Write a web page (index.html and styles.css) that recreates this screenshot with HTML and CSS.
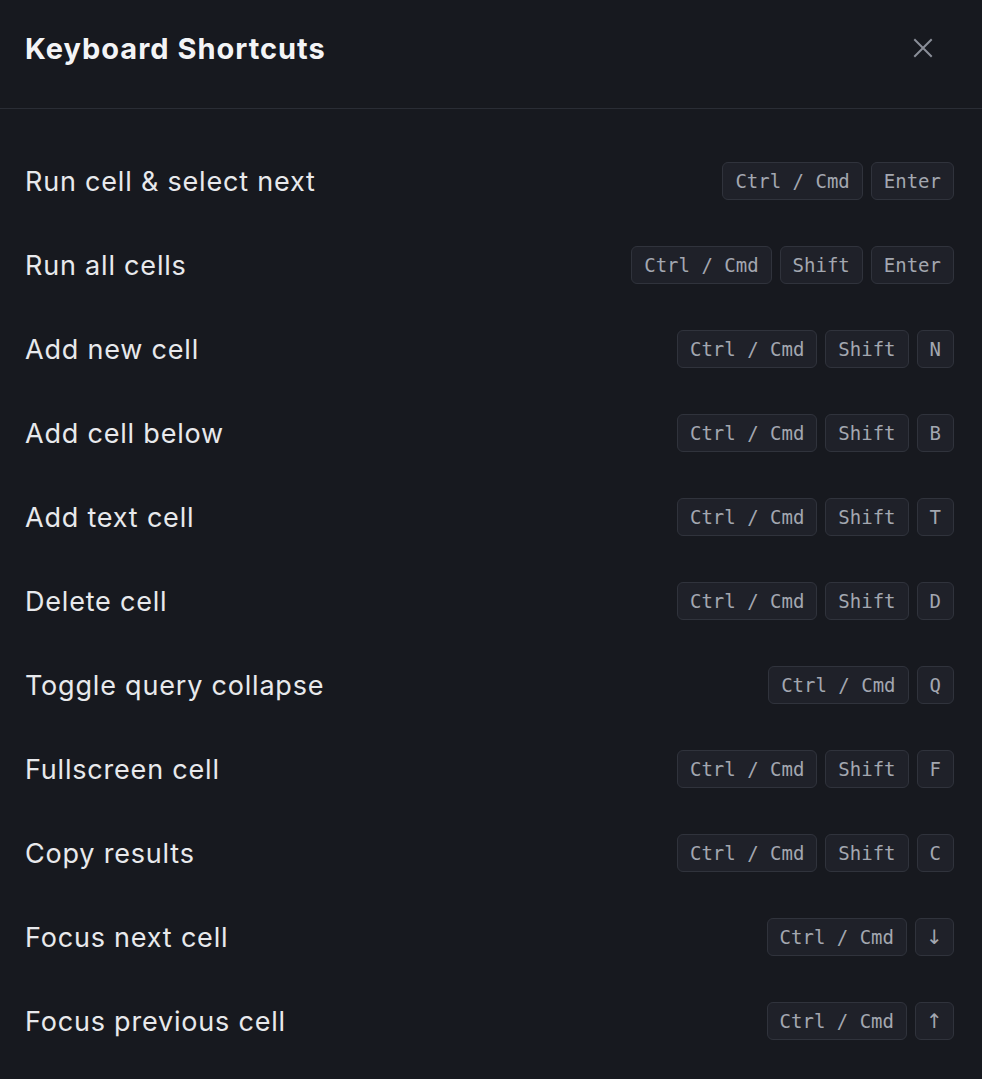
FILE: index.html
```html
<!DOCTYPE html>
<html lang="en">
<head>
<meta charset="utf-8">
<title>Keyboard Shortcuts</title>
<link rel="stylesheet" href="styles.css">
</head>
<body>
<div class="dialog">
  <div class="header">
    <h1 class="title">Keyboard Shortcuts</h1>
    <button class="close" aria-label="Close">
      <svg width="20" height="20" viewBox="0 0 20 20" fill="none" stroke="currentColor" stroke-width="2" stroke-linecap="square"><path d="M2 2L18 18M18 2L2 18"/></svg>
    </button>
  </div>
  <ul class="list">
    <li class="row"><span class="label">Run cell &amp; select next</span><span class="keys"><kbd class="key">Ctrl / Cmd</kbd><kbd class="key">Enter</kbd></span></li>
    <li class="row"><span class="label">Run all cells</span><span class="keys"><kbd class="key">Ctrl / Cmd</kbd><kbd class="key">Shift</kbd><kbd class="key">Enter</kbd></span></li>
    <li class="row"><span class="label">Add new cell</span><span class="keys"><kbd class="key">Ctrl / Cmd</kbd><kbd class="key">Shift</kbd><kbd class="key">N</kbd></span></li>
    <li class="row"><span class="label">Add cell below</span><span class="keys"><kbd class="key">Ctrl / Cmd</kbd><kbd class="key">Shift</kbd><kbd class="key">B</kbd></span></li>
    <li class="row"><span class="label">Add text cell</span><span class="keys"><kbd class="key">Ctrl / Cmd</kbd><kbd class="key">Shift</kbd><kbd class="key">T</kbd></span></li>
    <li class="row"><span class="label">Delete cell</span><span class="keys"><kbd class="key">Ctrl / Cmd</kbd><kbd class="key">Shift</kbd><kbd class="key">D</kbd></span></li>
    <li class="row"><span class="label">Toggle query collapse</span><span class="keys"><kbd class="key">Ctrl / Cmd</kbd><kbd class="key">Q</kbd></span></li>
    <li class="row"><span class="label">Fullscreen cell</span><span class="keys"><kbd class="key">Ctrl / Cmd</kbd><kbd class="key">Shift</kbd><kbd class="key">F</kbd></span></li>
    <li class="row"><span class="label">Copy results</span><span class="keys"><kbd class="key">Ctrl / Cmd</kbd><kbd class="key">Shift</kbd><kbd class="key">C</kbd></span></li>
    <li class="row"><span class="label">Focus next cell</span><span class="keys"><kbd class="key">Ctrl / Cmd</kbd><kbd class="key key-arrow">↓</kbd></span></li>
    <li class="row"><span class="label">Focus previous cell</span><span class="keys"><kbd class="key">Ctrl / Cmd</kbd><kbd class="key key-arrow">↑</kbd></span></li>
  </ul>
</div>
</body>
</html>
```
FILE: styles.css
```css
html, body {
  margin: 0;
  padding: 0;
  background: #17191f;
}
body {
  font-family: Inter, "Liberation Sans", sans-serif;
  color: #e8e9ec;
}
.dialog {
  width: 982px;
  min-height: 1079px;
}
.header {
  height: 109px;
  box-sizing: border-box;
  padding: 0 49px 12px 25px;
  display: flex;
  align-items: center;
  justify-content: space-between;
  border-bottom: 1px solid #2a2d35;
}
.title {
  margin: 0;
  font-size: 29px;
  font-weight: 700;
  color: #f3f4f6;
  letter-spacing: 1px;
}
.close {
  background: none;
  border: 0;
  padding: 0;
  width: 20px;
  height: 20px;
  color: #8a8e98;
  display: flex;
}
.list {
  list-style: none;
  margin: 0;
  padding: 30px 0 0;
}
.row {
  height: 84px;
  display: flex;
  align-items: center;
  justify-content: space-between;
  padding: 0 28px 0 25px;
}
.label {
  font-size: 27px;
  letter-spacing: 0.8px;
  color: #e8e9ec;
}
.keys {
  display: flex;
  gap: 8px;
}
.key {
  font-family: "DejaVu Sans Mono", "Liberation Mono", monospace;
  font-size: 19px;
  line-height: 36px;
  height: 36px;
  padding: 0 12px;
  border: 1px solid #30333c;
  border-radius: 6px;
  background: #1f2129;
  color: #a3a7b0;
  display: block;
}
.key-arrow {
  font-family: "DejaVu Sans", sans-serif;
  font-size: 20px;
  width: 39px;
  box-sizing: border-box;
  height: 38px;
  padding: 0;
  text-align: center;
}
```
